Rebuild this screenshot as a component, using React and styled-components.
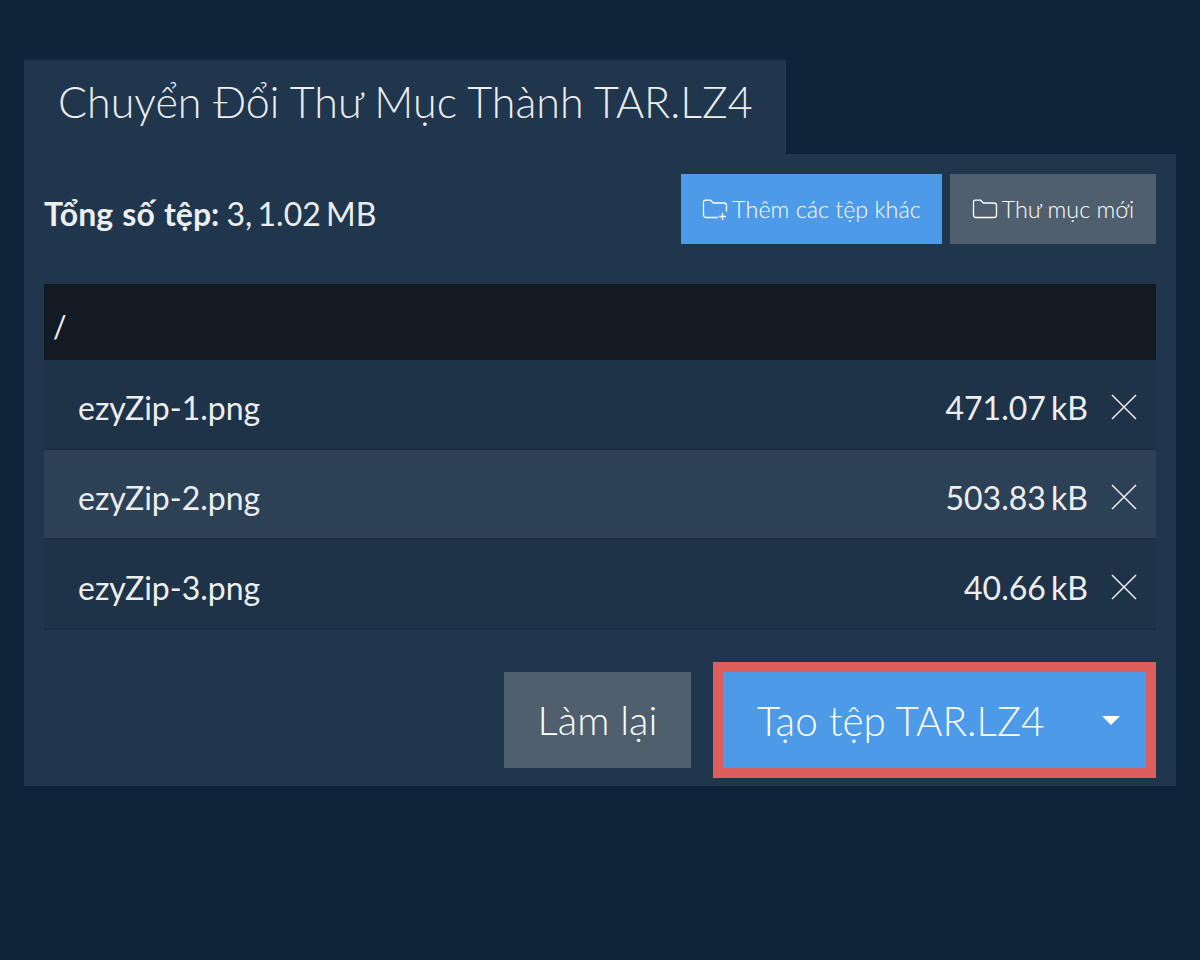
import React from 'react'
import styled, { createGlobalStyle } from 'styled-components'

const GlobalStyle = createGlobalStyle`
  * {
    box-sizing: border-box;
  }
  body {
    margin: 0;
    background: #0e2438;
    color: #eceef0;
    font-family: Lato, "Open Sans", sans-serif;
  }
`

const Page = styled.div`
  min-height: 960px;
  padding: 60px 24px 0;
`

const Tab = styled.h1`
  margin: 0;
  width: 762px;
  height: 94px;
  padding-left: 34px;
  background: #20364d;
  font-size: 43px;
  font-weight: 300;
  line-height: 83px;
  white-space: nowrap;
`

const Panel = styled.div`
  height: 632px;
  padding: 20px;
  background: #20364d;
`

const Toolbar = styled.div`
  display: flex;
  align-items: center;
  justify-content: space-between;
  height: 70px;
  margin-bottom: 40px;
`

const Total = styled.div`
  padding-top: 10px;
  font-size: 32px;
  line-height: 70px;
  word-spacing: -3px;
  b {
    margin-right: 2px;
    font-weight: 700;
    word-spacing: 1.5px;
  }
`

const ToolButtons = styled.div`
  display: flex;
  gap: 8px;
`

const SmallButton = styled.button`
  display: flex;
  align-items: center;
  justify-content: center;
  gap: 4px;
  width: ${(p) => p.$width}px;
  height: 70px;
  padding: 0;
  border: 0;
  background: ${(p) => (p.$primary ? '#4c9ae8' : '#4f5f6e')};
  color: #fff;
  font-family: inherit;
  font-size: 23.3px;
  font-weight: 300;
  white-space: nowrap;
`

const PathRow = styled.div`
  height: 76px;
  padding-left: 9px;
  background: #121a24;
  font-size: 30px;
  line-height: 84px;
`

const FileRow = styled.div`
  display: flex;
  align-items: center;
  justify-content: space-between;
  height: 90px;
  padding: 6px 19px 0 34px;
  background: ${(p) => (p.$active ? '#2d4156' : '#1f3348')};
  border-bottom: 2px solid #1b2e42;
  font-size: 32px;
`

const FileInfo = styled.div`
  display: flex;
  align-items: center;
  gap: 23px;
  word-spacing: -3px;
`

const Actions = styled.div`
  display: flex;
  justify-content: flex-end;
  align-items: center;
  gap: 22px;
  margin-top: 32px;
`

const ResetButton = styled.button`
  width: 187px;
  height: 96px;
  padding: 0;
  border: 0;
  background: #4f5f6e;
  color: #fff;
  font-family: inherit;
  font-size: 40px;
  font-weight: 300;
`

const CreateButton = styled.button`
  display: flex;
  align-items: center;
  justify-content: space-between;
  width: 443px;
  height: 116px;
  padding: 0 26px 0 34px;
  border: 10px solid #dc5f5d;
  background: #4c9ae8;
  color: #fff;
  font-family: inherit;
  font-size: 40.4px;
  font-weight: 300;
  white-space: nowrap;
`

const Caret = styled.span`
  width: 0;
  height: 0;
  border-left: 9px solid transparent;
  border-right: 9px solid transparent;
  border-top: 9px solid #fff;
`

function FolderIcon({ plus }) {
  return (
    <svg width="26" height="22" viewBox="0 0 26 22" fill="none" stroke="#fff" strokeWidth="1.3">
      {plus ? (
        <>
          <path d="M16 19.5H4a2.5 2.5 0 0 1-2.5-2.5V4A1.8 1.8 0 0 1 3.3 2.2h5.4l2.6 2.8h10.9A2.5 2.5 0 0 1 24.5 7.5v6" />
          <path d="M17 18.5h7M20.5 15v7" />
        </>
      ) : (
        <path d="M4 19.5h18a2.5 2.5 0 0 0 2.5-2.5V7.5A2.5 2.5 0 0 0 22 5H11.3L8.7 2.2H3.3A1.8 1.8 0 0 0 1.5 4v13A2.5 2.5 0 0 0 4 19.5z" />
      )}
    </svg>
  )
}

function CloseIcon() {
  return (
    <svg width="26" height="26" viewBox="0 0 26 26" fill="none" stroke="#eceef0" strokeWidth="1.5">
      <path d="M1 1l24 24M25 1L1 25" />
    </svg>
  )
}

const files = [
  { name: 'ezyZip-1.png', size: '471.07 kB' },
  { name: 'ezyZip-2.png', size: '503.83 kB', active: true },
  { name: 'ezyZip-3.png', size: '40.66 kB' },
]

export default function App() {
  return (
    <Page>
      <GlobalStyle />
      <Tab>Chuyển Đổi Thư Mục Thành TAR.LZ4</Tab>
      <Panel>
        <Toolbar>
          <Total>
            <b>Tổng số tệp:</b> 3, 1.02 MB
          </Total>
          <ToolButtons>
            <SmallButton $primary $width={261}>
              <FolderIcon plus />
              Thêm các tệp khác
            </SmallButton>
            <SmallButton $width={206}>
              <FolderIcon />
              Thư mục mới
            </SmallButton>
          </ToolButtons>
        </Toolbar>
        <PathRow>/</PathRow>
        {files.map((f) => (
          <FileRow key={f.name} $active={f.active}>
            {f.name}
            <FileInfo>
              {f.size}
              <CloseIcon />
            </FileInfo>
          </FileRow>
        ))}
        <Actions>
          <ResetButton>Làm lại</ResetButton>
          <CreateButton>
            Tạo tệp TAR.LZ4
            <Caret />
          </CreateButton>
        </Actions>
      </Panel>
    </Page>
  )
}
